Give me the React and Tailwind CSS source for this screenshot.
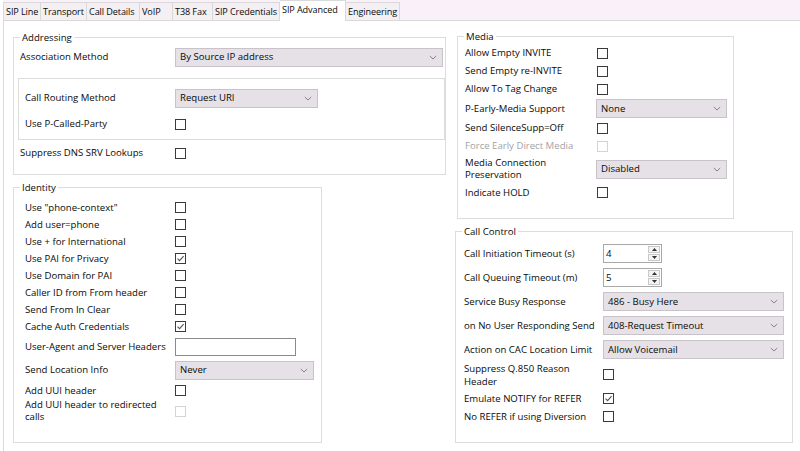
import React from 'react';

const TABS = [
  { name: 'SIP Line', w: 'w-[38px]' },
  { name: 'Transport', w: 'w-[46px]' },
  { name: 'Call Details', w: 'w-[53px]' },
  { name: 'VoIP', w: 'w-[33px]' },
  { name: 'T38 Fax', w: 'w-[40px]' },
  { name: 'SIP Credentials', w: 'w-[67px]' },
  { name: 'SIP Advanced', w: 'w-[66px]', active: true },
  { name: 'Engineering', w: 'w-[54px]' },
];

const Chevron = () => (
  <svg width="8" height="5" viewBox="0 0 8 5" className="shrink-0">
    <path d="M0.8 1 L4 4 L7.2 1" fill="none" stroke="#7a7a7a" strokeWidth="0.9" />
  </svg>
);

const Check = ({ checked, disabled }) => (
  <div
    className={`w-[11px] h-[11px] border bg-white flex items-center justify-center ${
      disabled ? 'border-[#d4d4d4]' : 'border-[#3a3a3a]'
    }`}
  >
    {checked && (
      <svg width="9" height="9" viewBox="0 0 9 9">
        <path d="M1.5 4.6 L3.6 6.7 L7.6 2.2" fill="none" stroke="#555555" strokeWidth="1.1" />
      </svg>
    )}
  </div>
);

const Select = ({ value, w }) => (
  <div className={`${w} h-[19px] bg-[#e6e1e6] border border-[#c8c3c8] flex items-center justify-between pl-[4px] pr-[5px]`}>
    <span>{value}</span>
    <Chevron />
  </div>
);

const Spin = ({ value }) => (
  <div className="w-[59px] h-[19px] bg-white border border-[#a8a8a8] flex">
    <div className="flex-1 pl-[2px] flex items-center">{value}</div>
    <div className="w-[13px] flex flex-col justify-center gap-[1px] py-[1px] pr-[1px]">
      <div className="flex-1 border border-[#c8c8c8] bg-[#f4f4f4] flex items-center justify-center">
        <svg width="5" height="3" viewBox="0 0 5 3"><path d="M0 3 L2.5 0 L5 3 Z" fill="#333" /></svg>
      </div>
      <div className="flex-1 border border-[#c8c8c8] bg-[#f4f4f4] flex items-center justify-center">
        <svg width="5" height="3" viewBox="0 0 5 3"><path d="M0 0 L2.5 3 L5 0 Z" fill="#333" /></svg>
      </div>
    </div>
  </div>
);

const Row = ({ label, h = 'h-[17px]', lw, muted, children }) => (
  <div className={`${h} flex items-center`}>
    <div className={`${lw} shrink-0 ${muted ? 'text-[#a3a3a3]' : ''}`}>{label}</div>
    {children}
  </div>
);

const Group = ({ title, className, children }) => (
  <fieldset className={`border border-[#dcdcdc] ${className}`}>
    <legend className="ml-[6px] px-[2px] leading-[13px]">{title}</legend>
    {children}
  </fieldset>
);

export default function App() {
  return (
    <div className="w-[800px] h-[451px] overflow-hidden bg-white pl-[3px] text-[9.6px] leading-[12px] text-[#0a0a0a] font-['Open_Sans','Liberation_Sans',sans-serif]">
      <div className="h-[21px] flex items-end border-b border-[#d9d9d9] bg-[#f9f0f9] text-[9.1px] tracking-[-0.1px]">
        {TABS.map((t, i) => (
          <div
            key={t.name}
            className={`${t.w} shrink-0 overflow-hidden border-t border-r border-[#d9d9d9] pl-[2px] whitespace-nowrap flex items-center ${
              i === 0 ? 'border-l' : ''
            } ${t.active ? 'h-[21px] -mb-px bg-white pb-[3px]' : 'h-[18px] bg-[#f3eff3] pt-[1px]'}`}
          >
            {t.name}
          </div>
        ))}
      </div>

      <div className="h-[430px] border-l border-[#dadada] flex">
        {/* left column */}
        <div className="w-[442px] shrink-0 pl-[9px] flex flex-col">
          <Group title="Addressing" className="mt-[10px] h-[144px]">
            <div className="pl-[6px] pt-[2px]">
              <Row label="Association Method" h="h-[22px]" lw="w-[155px]">
                <Select value="By Source IP address" w="w-[268px]" />
              </Row>
            </div>
            <div className="ml-[4px] mt-[10px] border border-[#dcdcdc] pl-[6px] pt-[9px] pb-[6px]">
              <Row label="Call Routing Method" h="h-[20px]" lw="w-[150px]">
                <Select value="Request URI" w="w-[143px]" />
              </Row>
              <div className="mt-[7px]">
                <Row label="Use P-Called-Party" h="h-[18px]" lw="w-[150px]">
                  <Check />
                </Row>
              </div>
            </div>
            <div className="pl-[6px] mt-[4px]">
              <Row label="Suppress DNS SRV Lookups" h="h-[18px]" lw="w-[155px]">
                <Check />
              </Row>
            </div>
          </Group>

          <Group title="Identity" className="mt-[6px] w-[309px] h-[262px]">
            <div className="pl-[11px] pt-[5px]">
              <Row label={'Use "phone-context"'} lw="w-[150px]"><Check /></Row>
              <Row label="Add user=phone" lw="w-[150px]"><Check /></Row>
              <Row label="Use + for International" lw="w-[150px]"><Check /></Row>
              <Row label="Use PAI for Privacy" lw="w-[150px]"><Check checked /></Row>
              <Row label="Use Domain for PAI" lw="w-[150px]"><Check /></Row>
              <Row label="Caller ID from From header" lw="w-[150px]"><Check /></Row>
              <Row label="Send From In Clear" lw="w-[150px]"><Check /></Row>
              <Row label="Cache Auth Credentials" lw="w-[150px]"><Check checked /></Row>
              <Row label="User-Agent and Server Headers" h="h-[23px]" lw="w-[150px]">
                <div className="w-[121px] h-[18px] bg-white border border-[#8a8a8a]" />
              </Row>
              <Row label="Send Location Info" h="h-[24px]" lw="w-[150px]">
                <Select value="Never" w="w-[139px]" />
              </Row>
              <Row label="Add UUI header" lw="w-[150px]"><Check /></Row>
              <Row label={<>Add UUI header to redirected<br />calls</>} h="h-[24px]" lw="w-[150px]">
                <Check disabled />
              </Row>
            </div>
          </Group>
        </div>

        {/* right column */}
        <div className="flex flex-col">
          <Group title="Media" className="ml-[11px] mt-[9px] w-[277px] h-[189px]">
            <div className="pl-[7px] pt-[1px]">
              <Row label="Allow Empty INVITE" h="h-[18px]" lw="w-[132px]"><Check /></Row>
              <Row label="Send Empty re-INVITE" h="h-[18px]" lw="w-[132px]"><Check /></Row>
              <Row label="Allow To Tag Change" h="h-[18px]" lw="w-[132px]"><Check /></Row>
              <Row label="P-Early-Media Support" h="h-[21px]" lw="w-[131px]">
                <Select value="None" w="w-[131px]" />
              </Row>
              <Row label="Send SilenceSupp=Off" h="h-[18px]" lw="w-[132px]"><Check /></Row>
              <Row label="Force Early Direct Media" h="h-[18px]" lw="w-[132px]" muted><Check disabled /></Row>
              <Row label={<>Media Connection<br />Preservation</>} h="h-[28px]" lw="w-[131px]">
                <Select value="Disabled" w="w-[131px]" />
              </Row>
              <Row label="Indicate HOLD" h="h-[19px]" lw="w-[132px]"><Check /></Row>
            </div>
          </Group>

          <Group title="Call Control" className="ml-[9px] mt-[6px] w-[338px] h-[218px]">
            <div className="pl-[8px] pt-[3px] leading-[13px]">
              <Row label="Call Initiation Timeout (s)" h="h-[24px]" lw="w-[139px]"><Spin value="4" /></Row>
              <Row label="Call Queuing Timeout (m)" h="h-[24px]" lw="w-[139px]"><Spin value="5" /></Row>
              <Row label="Service Busy Response" h="h-[24px]" lw="w-[139px]">
                <Select value="486 - Busy Here" w="w-[181px]" />
              </Row>
              <Row label="on No User Responding Send" h="h-[24px]" lw="w-[139px]">
                <Select value="408-Request Timeout" w="w-[181px]" />
              </Row>
              <Row label="Action on CAC Location Limit" h="h-[24px]" lw="w-[139px]">
                <Select value="Allow Voicemail" w="w-[181px]" />
              </Row>
              <Row label={<>Suppress Q.850 Reason<br />Header</>} h="h-[27px]" lw="w-[139px]"><Check /></Row>
              <Row label="Emulate NOTIFY for REFER" h="h-[20px]" lw="w-[139px]"><Check checked /></Row>
              <Row label="No REFER if using Diversion" h="h-[17px]" lw="w-[139px]"><Check /></Row>
            </div>
          </Group>
        </div>
      </div>
    </div>
  );
}
